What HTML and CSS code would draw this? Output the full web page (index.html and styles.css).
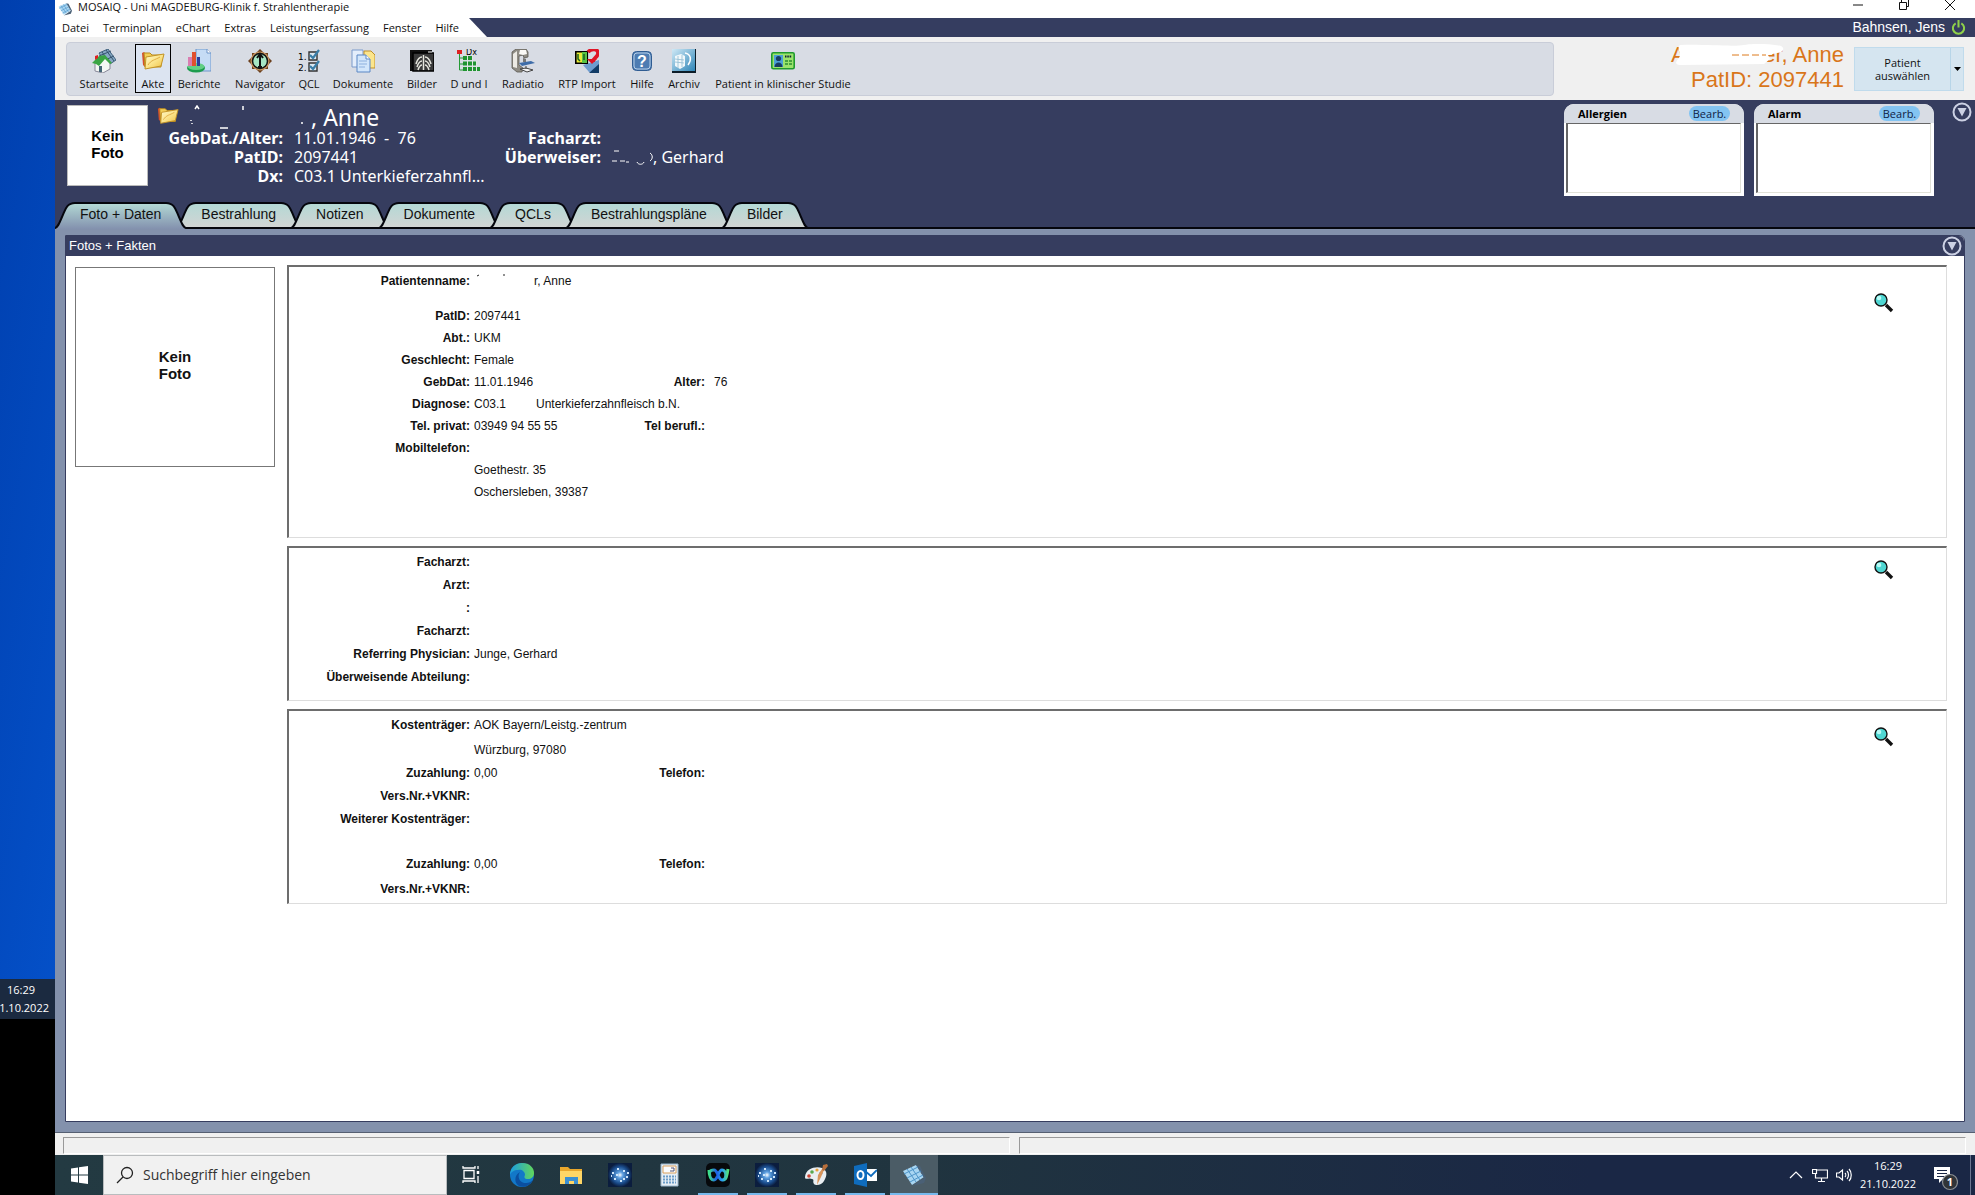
FILE: index.html
```html
<!DOCTYPE html>
<html lang="de">
<head>
<meta charset="utf-8">
<title>MOSAIQ - Uni MAGDEBURG-Klinik f. Strahlentherapie</title>
<link rel="stylesheet" href="styles.css">
</head>
<body>
<svg class="defs" aria-hidden="true">
  <defs>
    <linearGradient id="g-tab" x1="0" y1="0" x2="0" y2="1"><stop offset="0" stop-color="#b3d9d5"/><stop offset="1" stop-color="#d4d4d4"/></linearGradient>
    <linearGradient id="g-tab-on" x1="0" y1="0" x2="0" y2="1"><stop offset="0" stop-color="#b3d9d5"/><stop offset="1" stop-color="#8391ae"/></linearGradient>
    <linearGradient id="g-folder" x1="0" y1="0" x2="1" y2="1"><stop offset="0" stop-color="#fffbd0"/><stop offset=".5" stop-color="#fbe48a"/><stop offset="1" stop-color="#efc044"/></linearGradient>
    <linearGradient id="g-sky" x1="0" y1="0" x2="1" y2="1"><stop offset="0" stop-color="#cfe9f6"/><stop offset="1" stop-color="#2f86b8"/></linearGradient>
    <linearGradient id="g-edge" x1="0" y1="0" x2="1" y2="0"><stop offset="0" stop-color="#1b9de2"/><stop offset="1" stop-color="#62d65a"/></linearGradient>
    <radialGradient id="g-star"><stop offset="0" stop-color="#fff"/><stop offset=".25" stop-color="#5d9fe0"/><stop offset=".7" stop-color="#1a4c8c"/><stop offset="1" stop-color="#0b1d3e"/></radialGradient>
    <linearGradient id="g-webex" x1="0" y1="0" x2="1" y2="0"><stop offset="0" stop-color="#3de08a"/><stop offset=".4" stop-color="#1e5fe8"/><stop offset=".7" stop-color="#29a3f0"/><stop offset="1" stop-color="#53e07a"/></linearGradient>
  </defs>
  <symbol id="cap-l" viewBox="0 0 26 27"><path d="M26 1H20C11 1 10 9 7 15C4 22 3 25 0 27H26Z"/><path fill="none" stroke="#05060d" stroke-width="2" d="M26 1H20C11 1 10 9 7 15C4 22 3 25 0 26"/></symbol>
  <symbol id="cap-r" viewBox="0 0 26 27"><path d="M0 1H6C15 1 16 9 19 15C22 22 23 25 26 27H0Z"/><path fill="none" stroke="#05060d" stroke-width="2" d="M0 1H6C15 1 16 9 19 15C22 22 23 25 26 26"/></symbol>
  <symbol id="i-folder" viewBox="0 0 24 24"><path d="M1 4l2-1 2 2v14l-3-3z" fill="#d5502c"/><path d="M3 4h6l2 2h9v12H4z" fill="#f3cf58" stroke="#b98a1c"/><path d="M5 8l18-3-3 12-16 3z" fill="url(#g-folder)" stroke="#c39325"/><path d="M7 16c3-5 7-5 12-8" fill="none" stroke="#e0ac45"/></symbol>
  <symbol id="i-cube" viewBox="0 0 24 24"><path d="M1 8L14 2l8 12-12 8z" fill="#a9d6f2"/><path d="M14 2l4 1 6 12-2 5-12 3 12-8z" fill="#4a6076"/><path d="M5 6l9 13M9 4l9 13M2 11l14-7M5 15l14-7M8 19l13-7" stroke="#4d94c8" stroke-width="1"/></symbol>
  <symbol id="i-lens" viewBox="0 0 20 20"><path d="M12 12l6 6" stroke="#111" stroke-width="3.4"/><circle cx="7" cy="7" r="6" fill="#4fd6d2" stroke="#111" stroke-width="1.4"/><circle cx="5" cy="5" r="2.3" fill="#b8fbf7"/></symbol>
  <symbol id="i-down" viewBox="0 0 20 20"><circle cx="10" cy="10" r="8.5" fill="none" stroke="#ccd1e4" stroke-width="2"/><path d="M5.500 6h9L10 14.500z" fill="#ccd1e4"/></symbol>
  <symbol id="i-star" viewBox="0 0 24 24"><path d="M0 0h24v24H0z" fill="url(#g-star)"/><path d="M4 10h2M6 16h2M15 8h2M18 14h2M9 6h2M12 18h2M3 13h1M19 10h2M15 16h2M8 12h2" stroke="#cfe6fa" stroke-width="2"/></symbol>
</svg>

<aside class="desk">
  <div class="desk-wall"></div>
  <div class="desk-clock"><span>16:29</span><span>21.10.2022</span></div>
  <div class="desk-off"></div>
</aside>

<div class="app">
  <header class="titlebar">
    <svg class="logo"><use href="#i-cube"/></svg>
    <h1>MOSAIQ - Uni MAGDEBURG-Klinik f. Strahlentherapie</h1>
    <div class="win-btns">
      <button aria-label="Minimieren"><svg viewBox="0 0 12 12"><path d="M1 6h10"/></svg></button>
      <button aria-label="Verkleinern"><svg viewBox="0 0 12 12"><path d="M1.500 3.500h7v7h-7zM3.500 3V.5h7v7H9"/></svg></button>
      <button aria-label="Schließen"><svg viewBox="0 0 12 12"><path d="M1 1l10 10M11 1L1 11"/></svg></button>
    </div>
  </header>

  <div class="menubar">
    <nav class="menu">
      <button>Datei</button><button>Terminplan</button><button>eChart</button><button>Extras</button><button>Leistungserfassung</button><button>Fenster</button><button>Hilfe</button>
    </nav>
    <svg class="slant" viewBox="0 0 18 19"><path d="M0 0L18 19H0z" fill="#fff"/></svg>
    <span class="user">Bahnsen, Jens</span>
    <button class="power" aria-label="Abmelden"><svg viewBox="0 0 16 18"><path d="M5 4.500a6 6 0 1 0 6 0M8 1v8" fill="none" stroke="#8fd14a" stroke-width="2.200"/></svg></button>
  </div>

  <div class="toolbar">
    <div class="tools">
      <button><svg viewBox="0 0 24 24"><path d="M7 4l9-4 8 11-9 6z" fill="#86a9c4" stroke="#40607c"/><path d="M10 3l8 11M14 1l8 11M7 7l12-5M11 12l11-5" stroke="#35536f"/><path d="M3 13v9l8 2 7-4v-8l-6-5z" fill="#f4f7f4" stroke="#889"/><path d="M0 14L7 7l6-1 7 8-2 1-5-5-6 7-3-2z" fill="#3aa544"/><path d="M3 7l3-1v3l-3 2z" fill="#d22"/><path d="M7 17h3v6H7z" fill="#467"/></svg><span>Startseite</span></button>
      <button class="on"><svg><use href="#i-folder"/></svg><span>Akte</span></button>
      <button><svg viewBox="0 0 24 24"><path d="M9 0h11l4 4v18H9z" fill="#c5dcf5" stroke="#6d95c9"/><path d="M20 0v4h4" fill="#fff" stroke="#6d95c9"/><ellipse cx="9" cy="19" rx="9" ry="4.500" fill="#1c9c4e"/><ellipse cx="9" cy="17.500" rx="8.500" ry="3.500" fill="#63cf86"/><path d="M1 8h4v9H1z" fill="#d97eb0"/><path d="M5 3h4v14H5z" fill="#e0502e"/><path d="M10 8h3v9h-3z" fill="#2b3f9c"/></svg><span>Berichte</span></button>
      <button><svg viewBox="0 0 24 24"><path d="M12 0l4 4 4 0 0 4 4 4-4 4 0 4-4 0-4 4-4-4-4 0 0-4-4-4 4-4 0-4 4 0z" fill="#6a3f1c"/><circle cx="12" cy="12" r="9.500" fill="#c79560"/><circle cx="12" cy="12" r="7.500" fill="#a6e6c4" stroke="#111" stroke-width="1.500"/><path d="M12 6v12M9 9l3-4 3 4M10 18h4" stroke="#111" stroke-width="2" fill="none"/></svg><span>Navigator</span></button>
      <button><svg viewBox="0 0 24 24"><text x="1" y="11" class="ico-num">1.</text><text x="1" y="22" class="ico-num">2.</text><path d="M12 3h8v8h-8zM12 14h8v8h-8z" fill="#dce9f2" stroke="#333" stroke-width="1.400"/><path d="M13 6l3 3 6-8M13 17l3 3 6-8" fill="none" stroke="#3a7ea8" stroke-width="2.200"/></svg><span>QCL</span></button>
      <button><svg viewBox="0 0 24 24"><path d="M1 1h11v17H1z" fill="#e4eefb" stroke="#7a9acb"/><path d="M13 2h7l4 4v13H13z" fill="#fbe58c" stroke="#c0902a"/><path d="M6 6h9l4 4v13H6z" fill="#d2e6fb" stroke="#5b87c4"/><path d="M15 6v4h4" fill="#fff" stroke="#5b87c4"/><path d="M8 12h8M8 15h8M8 18h6" stroke="#8db0de"/></svg><span>Dokumente</span></button>
      <button><svg viewBox="0 0 24 24"><path d="M0 1h22v4H3v17H0z" fill="#111"/><path d="M3 4h21v18H3z" fill="#3a3a3a" stroke="#000" stroke-width="1.500"/><path d="M13.500 6v15M12 8C8 8 7 12 6 15M12 12c-3 0-4 3-5 6M12 16c-2 0-3 2-4 5M15 8c4 0 5 4 6 7M15 12c3 0 4 3 5 6M15 16c2 0 3 2 4 5" stroke="#e5e5dd" stroke-width="1.500" fill="none"/><path d="M18 3h4" stroke="#fff"/></svg><span>Bilder</span></button>
      <button><svg viewBox="0 0 24 24"><path d="M0 1h5v4H0z" fill="#d22"/><path d="M2.500 5v16H6M2.500 9H6M2.500 15H6" stroke="#259a35" fill="none"/><path d="M6 7h10v4H6zM6 12.500h14v4H6zM6 18h17v4H6z" fill="#1f9430"/><path d="M10.500 6v17M15.500 6v17M19.500 12v11" stroke="#dfe7e4"/><text x="9" y="6" class="ico-dx">Dx</text></svg><span>D und I</span></button>
      <button><svg viewBox="0 0 24 24"><path d="M1 3l4-3h10l2 3v5l-4 1-1-3-4 1v9l4 3-1 4H6l-5-4z" fill="#8f8c84" stroke="#5a5852" stroke-width=".8"/><path d="M2 5l4-3v17l-4-1z" fill="#eceae4"/><path d="M9 1h6l1 4-4 1-4-1z" fill="#faf9f6"/><path d="M8 14l12-2 4 2-13 3z" fill="#3e6ca8"/><path d="M12 9l3 1v3h-3z" fill="#777"/><path d="M15 17v3M9 20l6-1 7 2-6 2z" stroke="#444" fill="#f4f4f4"/></svg><span>Radiatio</span></button>
      <button><svg viewBox="0 0 24 24"><path d="M8 16L24 11v12H14z" fill="#6e9ccf"/><path d="M14 24l10-9v9z" fill="#123c66"/><path d="M.8 2.800h11.500v11.500H.8z" fill="#e9ec36" stroke="#000" stroke-width="1.600"/><path d="M7 3h5v11H7z" fill="#58c243"/><path d="M3 5v5l2 2M9 5v6" stroke="#1a5c22" stroke-width="1.500" fill="none"/><path d="M13 3c4-4 10-3 10 1 0 5-5 4-5 9" fill="none" stroke="#e01425" stroke-width="3.600"/><path d="M12 10l5 5 5-5z" fill="#e01425"/></svg><span>RTP Import</span></button>
      <button><svg viewBox="0 0 24 24"><rect x="2.500" y="2.500" width="19" height="19" rx="4" fill="#4d7cb2" stroke="#2f5c92"/><rect x="4" y="4" width="16" height="16" rx="3" fill="none" stroke="#b7cfe8"/><text x="12" y="17.500" class="ico-help">?</text></svg><span>Hilfe</span></button>
      <button><svg viewBox="0 0 24 24"><path d="M0 0h24v24H0z" fill="#0c1c28"/><path d="M0 0h23v22H0z" fill="url(#g-sky)"/><path d="M3 7l6-2 4 2v10l-5 3-5-3z" fill="#f1f8fb"/><path d="M3 10l9 1M3 13l9 1M6 7v12M10 6v12" stroke="#8fbbd2" stroke-width=".8"/><path d="M13 4c6 1 7 7 3 12" stroke="#fff" fill="none" stroke-width="1.500"/></svg><span>Archiv</span></button>
      <button><svg viewBox="0 0 24 24"><rect x=".8" y="3.800" width="22.400" height="16" rx="1.500" fill="#9be36b" stroke="#1f9a2e" stroke-width="1.600"/><path d="M3 6h9v12H3z" fill="#4b9fd6"/><circle cx="7.500" cy="9.500" r="2.600" fill="#173d63"/><path d="M3.500 18c0-6 8-6 8 0z" fill="#173d63"/><path d="M14 7.500h7" stroke="#123" stroke-width="2" stroke-dasharray="1.500 .8"/><path d="M14 12h3M18 12h3M14 15h3M18 15h3" stroke="#2c8f33" stroke-width="1.500"/></svg><span>Patient in klinischer Studie</span></button>
    </div>
    <div class="current">
      <div class="redacted"><span>A</span><span>er, Anne</span>
        <svg class="blob" viewBox="0 0 112 22"><path d="M6 1C30 0 60 3 70 1S100 0 107 2C112 5 108 9 103 9L94 11 96 15 90 20 6 21C0 21 2 17 5 14 8 9 2 5 6 1z" fill="#fff"/><path d="M58 11h34" stroke="#dd7a1c" stroke-width="1" stroke-dasharray="7 3"/></svg>
      </div>
      <div>PatID: 2097441</div>
    </div>
    <div class="pick">
      <button class="pick-main">Patient<br>auswählen</button>
      <button class="pick-drop" aria-label="Patientenliste"><svg viewBox="0 0 7 4"><path d="M0 0h7L3.500 4z"/></svg></button>
    </div>
  </div>

  <section class="patient">
    <div class="photo">Kein<br>Foto</div>
    <div class="facts">
      <div class="name"><svg class="name-ico"><use href="#i-folder"/></svg><svg class="smudge" viewBox="0 0 121 26"><path d="M5 4l2-3 2 3M53 1v4M30 23h8M1 15v1M2 18v1M112 17v2" stroke="#fff" stroke-width="1.500" fill="none"/></svg><span>, Anne</span></div>
      <div class="fact-cols">
        <dl class="pairs first">
          <dt>GebDat./Alter:</dt><dd>11.01.1946&nbsp; -&nbsp; 76</dd>
          <dt>PatID:</dt><dd>2097441</dd>
          <dt>Dx:</dt><dd>C03.1 Unterkieferzahnfl...</dd>
        </dl>
        <dl class="pairs">
          <dt>Facharzt:</dt><dd></dd>
          <dt>Überweiser:</dt><dd><svg class="smudge2" viewBox="0 0 41 18"><path d="M2 3h5M0 13h5M8 13h5M14 14h3M25 14c1 3 6 3 7 0M38 5c3 2 3 6 0 8" stroke="#fff" fill="none"/></svg>, Gerhard</dd>
        </dl>
      </div>
    </div>
    <div class="notes">
      <section class="note"><header><h2>Allergien</h2><button>Bearb.</button></header><div class="note-body"></div></section>
      <section class="note"><header><h2>Alarm</h2><button>Bearb.</button></header><div class="note-body"></div></section>
    </div>
    <button class="fold" aria-label="Einklappen"><svg><use href="#i-down"/></svg></button>
  </section>

  <nav class="tabs">
    <button class="tab on"><svg><use href="#cap-l"/></svg><span>Foto + Daten</span><svg><use href="#cap-r"/></svg></button>
    <button class="tab"><svg><use href="#cap-l"/></svg><span>Bestrahlung</span><svg><use href="#cap-r"/></svg></button>
    <button class="tab"><svg><use href="#cap-l"/></svg><span>Notizen</span><svg><use href="#cap-r"/></svg></button>
    <button class="tab"><svg><use href="#cap-l"/></svg><span>Dokumente</span><svg><use href="#cap-r"/></svg></button>
    <button class="tab"><svg><use href="#cap-l"/></svg><span>QCLs</span><svg><use href="#cap-r"/></svg></button>
    <button class="tab"><svg><use href="#cap-l"/></svg><span>Bestrahlungspläne</span><svg><use href="#cap-r"/></svg></button>
    <button class="tab"><svg><use href="#cap-l"/></svg><span>Bilder</span><svg><use href="#cap-r"/></svg></button>
  </nav>

  <main class="stage">
    <section class="panel">
      <header class="panel-head"><h2>Fotos + Fakten</h2><button class="fold" aria-label="Einklappen"><svg><use href="#i-down"/></svg></button></header>
      <div class="panel-body">
        <div class="bigphoto">Kein<br>Foto</div>
        <div class="cards">
          <section class="card card-person">
            <dl class="rows">
              <div class="tall"><dt>Patientenname:</dt><dd><svg class="smudge3" viewBox="0 0 60 14"><path d="M3 2l2-1M29 1h2" stroke="#222"/></svg>r, Anne</dd></div>
              <div><dt>PatID:</dt><dd>2097441</dd></div>
              <div><dt>Abt.:</dt><dd>UKM</dd></div>
              <div><dt>Geschlecht:</dt><dd>Female</dd></div>
              <div><dt>GebDat:</dt><dd>11.01.1946</dd><dt>Alter:</dt><dd class="far">76</dd></div>
              <div><dt>Diagnose:</dt><dd>C03.1</dd><dd class="wide">Unterkieferzahnfleisch b.N.</dd></div>
              <div><dt>Tel. privat:</dt><dd>03949 94 55 55</dd><dt>Tel berufl.:</dt></div>
              <div><dt>Mobiltelefon:</dt></div>
              <div><dt></dt><dd>Goethestr. 35</dd></div>
              <div><dt></dt><dd>Oschersleben, 39387</dd></div>
            </dl>
            <button class="lens" aria-label="Details"><svg><use href="#i-lens"/></svg></button>
          </section>
          <section class="card card-doctor">
            <dl class="rows loose">
              <div><dt>Facharzt:</dt></div>
              <div><dt>Arzt:</dt></div>
              <div><dt>:</dt></div>
              <div><dt>Facharzt:</dt></div>
              <div><dt>Referring Physician:</dt><dd>Junge, Gerhard</dd></div>
              <div><dt>Überweisende Abteilung:</dt></div>
            </dl>
            <button class="lens" aria-label="Details"><svg><use href="#i-lens"/></svg></button>
          </section>
          <section class="card card-payer">
            <dl class="rows loose">
              <div><dt>Kostenträger:</dt><dd>AOK Bayern/Leistg.-zentrum</dd></div>
              <div class="lead"><dt></dt><dd>Würzburg, 97080</dd></div>
              <div><dt>Zuzahlung:</dt><dd>0,00</dd><dt>Telefon:</dt></div>
              <div><dt>Vers.Nr.+VKNR:</dt></div>
              <div><dt>Weiterer Kostenträger:</dt></div>
              <div class="block"><dt>Zuzahlung:</dt><dd>0,00</dd><dt>Telefon:</dt></div>
              <div class="lead"><dt>Vers.Nr.+VKNR:</dt></div>
            </dl>
            <button class="lens" aria-label="Details"><svg><use href="#i-lens"/></svg></button>
          </section>
        </div>
      </div>
    </section>
  </main>

  <footer class="status"><div></div><div></div></footer>

  <div class="taskbar">
    <button class="start" aria-label="Start"><svg viewBox="0 0 17 18"><path d="M0 2.500l7-1v7H0zM8 1.300L17 0v8.500H8zM0 9.500h7v7l-7-1zM8 9.500h9V18l-9-1.300z" fill="#fff"/></svg></button>
    <label class="search"><svg viewBox="0 0 18 18"><circle cx="11" cy="7" r="5.500"/><path d="M7 11l-6 6"/></svg><input type="text" placeholder="Suchbegriff hier eingeben" aria-label="Suchbegriff hier eingeben"></label>
    <div class="apps">
      <button class="views" aria-label="Aktive Anwendungen"><svg viewBox="0 0 24 24" fill="none" stroke="#fff" stroke-width="1.300"><path d="M5 7.500h10v8H5zM4 3v2h12V3M4 20v-2h12v2M19 3v3M19 13v7"/><path d="M19 8v3" stroke-width="2.500"/></svg></button>
      <button aria-label="Edge"><svg viewBox="0 0 24 24"><circle cx="12" cy="12" r="12" fill="#1278c8"/><path d="M0 12C0 4 6 0 12 0c8 0 12 5 12 10 0 4-3 6-6 6-4 0-4-2-3-4 0-4-4-6-7-5-4 0-7 2-8 5z" fill="url(#g-edge)"/><path d="M10 9c-3 4-1 11 6 11 3 0 5-1 7-3-3 6-9 8-14 6-5-3-5-11 1-14z" fill="#0b4fa0"/></svg></button>
      <button aria-label="Explorer"><svg viewBox="0 0 24 24"><path d="M1 4h8l2 2h12v5H1z" fill="#e9a72c"/><path d="M1 8h22v13H1z" fill="#ffd666"/><path d="M6 21v-7h13v7h-4v-3h-5v3z" fill="#3b8fd1"/></svg></button>
      <button aria-label="Viewer"><svg><use href="#i-star"/></svg></button>
      <button aria-label="Rechner"><svg viewBox="0 0 24 24"><path d="M4 1h17v22H4z" fill="#e6eef5" stroke="#9ab6cc"/><path d="M6 3h13v7H6z" fill="#fbfdff" stroke="#d9a05c"/><path d="M13 8h4V5h-3" fill="none" stroke="#557"/><path d="M6 13.500h13M6 16.500h13M6 19.500h13" stroke="#6a9cc8" stroke-width="2" stroke-dasharray="2 1"/></svg></button>
      <button class="run" aria-label="Webex"><svg viewBox="0 0 24 24"><rect width="24" height="24" rx="5" fill="#07090c"/><path d="M3 7c0 6 2 10 5 10 4 0 4-10 8-10 5 0 5 10 0 10-4 0-4-10-8-10-5 0-5 3-4 6M17 17c3 0 4-4 5-11" fill="none" stroke="url(#g-webex)" stroke-width="3"/></svg></button>
      <button class="run" aria-label="Viewer 2"><svg><use href="#i-star"/></svg></button>
      <button class="run" aria-label="Paint"><svg viewBox="0 0 24 24"><path d="M1 14C2 5 12 3 18 5c7 3 4 10 2 13-2 4-8 5-10 3-2-3 1-4-2-5-3-2-7 2-7-2z" fill="#e9eef2"/><circle cx="5" cy="13" r="1.800" fill="#c43"/><circle cx="8" cy="9" r="1.800" fill="#5aa84e"/><circle cx="13" cy="7" r="1.600" fill="#e8a33a"/><circle cx="17" cy="10" r="1.600" fill="#4a80c8"/><path d="M13 22l1-10 4-6 2 1-3 7z" fill="#d9955b"/><path d="M18 7l1-5 4-1 1 2-4 5z" fill="#b66f3c"/></svg></button>
      <button class="run" aria-label="Outlook"><svg viewBox="0 0 24 24"><path d="M11 6h13v12H11z" fill="#fff"/><path d="M12 8l6 5 6-6" fill="none" stroke="#0f6cbd" stroke-width="1.800"/><path d="M1 3l13-3v24L1 21z" fill="#0f6cbd"/><ellipse cx="7.500" cy="12" rx="3" ry="4" fill="none" stroke="#fff" stroke-width="2"/></svg></button>
      <button class="run front" aria-label="MOSAIQ"><svg><use href="#i-cube"/></svg></button>
    </div>
    <div class="tray">
      <button aria-label="Ausgeblendete Symbole"><svg viewBox="0 0 16 16"><path d="M2 11l6-6 6 6"/></svg></button>
      <button aria-label="Netzwerk"><svg viewBox="0 0 16 16"><path d="M5 3h10.500v8H3.500V7M9.500 11v3M6 14.500h7M.5 2.500h4v4h-4z"/></svg></button>
      <button aria-label="Lautstärke"><svg viewBox="0 0 16 16"><path d="M.5 6v4h2.500l3.500 3V3L3 6zM9 6c1 1 1 3 0 4M11 4c2 2 2 6 0 8M13 2c3 3 3 9 0 12"/></svg></button>
      <div class="clock"><span>16:29</span><span>21.10.2022</span></div>
      <button class="inbox" aria-label="Mitteilungen"><svg viewBox="0 0 24 24"><path d="M0 0h16v12H9l-4 4v-4H0z" fill="#fff"/><path d="M3 3.500h10M3 6.500h10M3 9.500h7" stroke="#1a2745"/><circle cx="16" cy="15" r="7.500" fill="#303438" stroke="#8b8f94"/><text x="16" y="19" class="ico-badge">1</text></svg></button>
    </div>
  </div>
</div>
</body>
</html>
```

FILE: styles.css
```css
* { box-sizing: border-box; }
html, body { margin: 0; }
body {
  display: flex;
  min-height: 100vh;
  font-family: "Open Sans", "Noto Sans", sans-serif;
  font-size: 12px;
  color: #111;
  background: #000;
}
h1, h2, dl, dt, dd { margin: 0; font-size: inherit; font-weight: inherit; }
button { margin: 0; padding: 0; border: 0; background: none; font: inherit; color: inherit; }
svg { display: block; }
.defs { position: absolute; width: 0; height: 0; }

/* neighbouring screen */
.desk { width: 55px; flex: none; display: flex; flex-direction: column; overflow: hidden; }
.desk-wall { flex: 1; background: linear-gradient(100deg, #003fae, #0450c8); }
.desk-clock {
  height: 40px; background: #1b2a40; color: #fff; font-size: 11px; line-height: 18px; padding: 2px 6px;
  display: flex; flex-direction: column; align-items: flex-end;
}
.desk-clock span:first-child { padding-right: 14px; }
.desk-off { height: 176px; background: #000; }

.app { flex: 1; min-width: 0; display: flex; flex-direction: column; background: #8391ac; }

/* title and menu */
.titlebar { height: 18px; background: #fff; display: flex; align-items: center; padding-left: 3px; }
.logo { width: 14px; height: 14px; margin-right: 6px; }
.titlebar h1 { flex: 1; line-height: 14px; padding-bottom: 4px; font-size: 11px; }
.win-btns { display: flex; gap: 34px; padding: 0 19px 8px 0; }
.win-btns svg { width: 12px; height: 12px; fill: none; stroke: #111; }
.menubar { height: 19px; display: flex; align-items: center; background: #353d60; }
.menu { height: 19px; display: flex; justify-content: space-between; width: 414px; padding: 0 10px 0 7px; background: #fff; font-size: 11px; white-space: nowrap; }
.slant { width: 18px; height: 19px; }
.user { margin-left: auto; font: 14px/19px "Liberation Sans", Arial, sans-serif; color: #fff; }
.power { margin: 0 9px 0 6px; }
.power svg { width: 15px; height: 17px; }

/* toolbar */
.toolbar { height: 63px; background: #f0f0f0; display: flex; align-items: center; padding: 0 11px; }
.tools {
  flex: 1; height: 54px; display: grid; align-items: center;
  grid-template-columns: 62px 36px 56px 66px 32px 76px 42px 52px 56px 72px 38px 46px 152px;
  padding-left: 6px; background: #d8dce4; border: 1px solid #c9cdd8; border-radius: 4px; font-size: 11px;
}
.tools button { height: 49px; display: flex; flex-direction: column; align-items: center; gap: 3px; padding-top: 5px; white-space: nowrap; line-height: 16px; }
.tools svg { width: 24px; height: 24px; flex: none; }
.tools .on { border: 1px solid #000; background: #dce4f1; padding-top: 4px; }
.ico-num { font: 9px "DejaVu Sans", sans-serif; }
.ico-dx { font: 8px "DejaVu Sans", sans-serif; }
.ico-help { font: bold 16px "Liberation Sans", Arial, sans-serif; fill: #fff; text-anchor: middle; }
.ico-badge { font: bold 11px "Open Sans", sans-serif; fill: #fff; text-anchor: middle; }
.current { width: 300px; padding: 0 10px 3px 0; text-align: right; font: 22px/25px "Liberation Sans", Arial, sans-serif; color: #d9761a; }
.redacted { position: relative; display: flex; justify-content: space-between; width: 173px; margin-left: auto; }
.blob { position: absolute; left: 3px; top: 2px; width: 112px; height: 22px; }
.pick { height: 44px; display: flex; background: #d5e5f0; border: 1px solid #c0dbec; }
.pick-main { width: 95px; font-size: 11px; line-height: 13px; }
.pick-drop { width: 13px; border-left: 1px solid #b7d5e8; display: grid; place-items: center; }
.pick-drop svg { width: 7px; height: 4px; }

/* patient header */
.patient { height: 102px; background: #363d5f; color: #fff; display: flex; align-items: flex-start; padding: 5px 3px 0 12px; }
.photo { width: 81px; height: 81px; padding-bottom: 4px; background: #fff; color: #000; border: 1px solid #bbb; display: grid; place-content: center; text-align: center; font: bold 15px/17px "Liberation Sans", Arial, sans-serif; }
.facts { flex: 1; padding-left: 8px; font: 16px/19px "Noto Sans", sans-serif; }
.name { display: flex; height: 24px; font-size: 23px; line-height: 24px; }
.name-ico { width: 24px; height: 22px; margin-right: 10px; }
.smudge { width: 121px; height: 26px; }
.fact-cols { display: flex; }
.pairs { display: grid; grid-template-columns: 123px 1fr; column-gap: 11px; grid-auto-rows: 19px; align-content: start; white-space: nowrap; }
.pairs.first { grid-template-columns: 127px 184px; }
.pairs dt { text-align: right; font-weight: bold; }
.pairs dd { display: flex; }
.smudge2 { width: 41px; height: 18px; }
.notes { display: flex; gap: 10px; margin: -1px 18px 0 0; }
.note { width: 180px; height: 92px; background: #fff; border-radius: 10px 10px 0 0; padding: 0 3px 3px 2px; color: #000; overflow: hidden; }
.note header { height: 19px; margin: 0 -3px 0 -2px; padding: 0 14px; display: flex; align-items: center; justify-content: space-between; background: #d8dce4; }
.note h2 { font-weight: bold; font-size: 11px; }
.note header button { width: 41px; height: 15px; line-height: 15px; border-radius: 8px; background: #83c4f2; font-size: 11px; color: #124; }
.note-body { height: 70px; border: 1px solid #e2e2d8; border-top-color: #666; border-left: 2px solid #666; }
.fold svg { width: 20px; height: 20px; }
.patient .fold { margin-top: -3px; }

/* tabs */
.tabs { height: 27px; flex: none; display: flex; align-items: flex-end; background: #363d5f; border-bottom: 2px solid #05060d; font: 14px/20px "Liberation Sans", Arial, sans-serif; }
.tab { position: relative; display: flex; height: 27px; margin: 0 -10px -2px 0; fill: url(#g-tab); }
.tab svg { width: 26px; height: 27px; }
.tab span { height: 27px; border-top: 2px solid #05060d; background: linear-gradient(#b3d9d5, #d4d4d4); margin: 0 -1px; position: relative; white-space: nowrap; }
.tab::after { content: ""; position: absolute; left: 0; right: 0; bottom: 0; height: 2px; background: #05060d; }
.tab.on { z-index: 1; fill: url(#g-tab-on); }
.tab.on span { background: linear-gradient(#b3d9d5, #8391ae); }
.tab.on::after { display: none; }

/* main panel */
.stage { flex: 1; display: flex; padding: 6px 10px 10px; border-bottom: 1px solid #555f72; }
.panel { flex: 1; display: flex; flex-direction: column; background: #fff; border: 1px solid #363d5f; border-radius: 0 6px 0 0; overflow: hidden; }
.panel-head { height: 20px; display: flex; align-items: center; justify-content: space-between; padding: 0 2px 0 3px; background: #363d5f; color: #fff; font: 13px/20px "Liberation Sans", Arial, sans-serif; }
.panel-body { display: flex; gap: 12px; padding: 9px 17px 0 9px; font: 12px/14px "Liberation Sans", Arial, sans-serif; }
.bigphoto { width: 200px; height: 200px; margin-top: 2px; padding-bottom: 4px; border: 1px solid #777; display: grid; place-content: center; text-align: center; font: bold 15px/17px "Liberation Sans", Arial, sans-serif; }
.cards { flex: 1; display: flex; flex-direction: column; gap: 8px; }
.card { display: flex; align-items: flex-start; justify-content: space-between; border: 1px solid #ddd; border-top: 2px solid #6d6d6d; border-left: 2px solid #6d6d6d; padding: 2px 52px 0 0; }
.card-person { height: 273px; padding-top: 3px; }
.card-doctor { height: 155px; }
.card-payer { height: 195px; }
.rows > div { display: grid; grid-template-columns: 181px 58px 169px 60px; column-gap: 4px; height: 22px; align-items: center; white-space: nowrap; }
.rows > .tall { height: 35px; align-items: start; padding-top: 4px; }
.rows.loose > div { height: 23px; }
.rows.loose > .lead { height: 25px; padding-top: 2px; }
.rows.loose > .block { height: 45px; padding-top: 22px; }
.rows dt { text-align: right; font-weight: bold; }
.rows dd { display: flex; }
.rows .far { padding-left: 5px; }
.smudge3 { width: 60px; height: 14px; flex: none; }
.lens { margin-top: 10px; }
.card-person .lens { margin-top: 23px; }
.card-payer .lens { margin-top: 14px; }
.lens svg { width: 20px; height: 20px; }

/* status bar */
.status { height: 22px; background: #f0f0f0; display: flex; gap: 9px; padding: 4px 9px 1px 8px; }
.status div { flex: 1; border: 1px solid #fff; border-top-color: #999; border-left-color: #999; }

/* taskbar */
.taskbar { height: 40px; display: flex; background: linear-gradient(90deg, #233a42, #20343f 45%, #1a2745 80%); color: #fff; }
.start { width: 48px; display: grid; place-items: center; }
.start svg { width: 17px; height: 18px; }
.search { width: 344px; display: flex; align-items: center; gap: 9px; padding-left: 12px; background: #f1f1f1; border: 1px solid #b9bcbe; }
.search svg { width: 18px; height: 18px; fill: none; stroke: #222; stroke-width: 1.3px; }
.search input { flex: 1; min-width: 0; border: 0; padding: 0; background: none; font: 14px/20px "Open Sans", sans-serif; color: #333; }
.search input::placeholder { color: #333; opacity: 1; }
.apps { display: flex; gap: 1px; }
.apps button { width: 48px; height: 40px; display: grid; place-items: center; position: relative; }
.apps .views { margin-right: 2px; }
.apps svg { width: 24px; height: 24px; }
.run::after { content: ""; position: absolute; left: 4px; right: 4px; bottom: 0; height: 2px; background: #76b9ed; }
.apps .front { background: #4b5c66; }
.front::after { left: 0; right: 0; }
.tray { margin-left: auto; display: flex; align-items: center; gap: 8px; padding-right: 4px; }
.tray svg { width: 16px; height: 16px; fill: none; stroke: #fff; stroke-width: 1.2px; }
.clock { display: flex; flex-direction: column; align-items: center; line-height: 18px; font-size: 11px; }
.tray .inbox { border-right: 1px solid #6b7690; height: 40px; padding: 8px 12px 0 10px; }
.tray .inbox svg { width: 24px; height: 24px; stroke: none; }
```
